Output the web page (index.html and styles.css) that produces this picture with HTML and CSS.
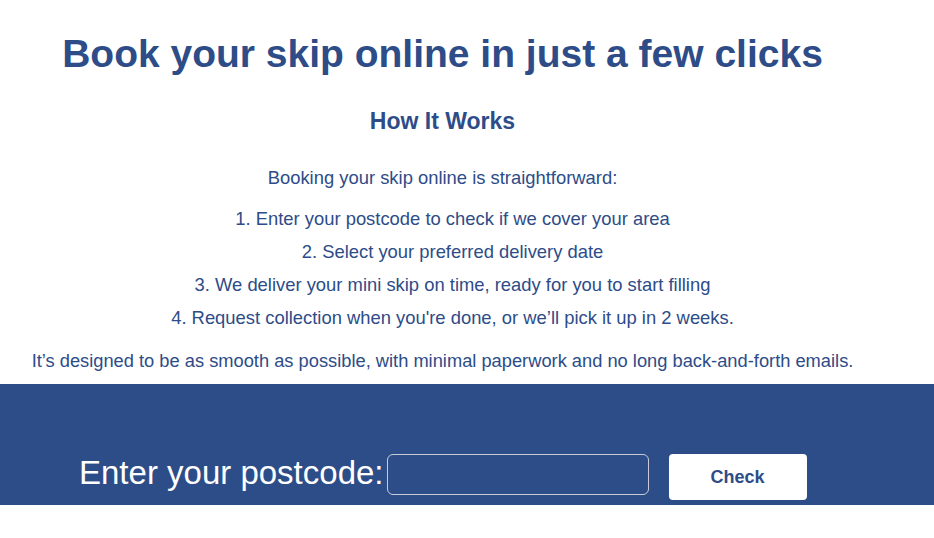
FILE: index.html
```html
<!DOCTYPE html>
<html lang="en">

<head>
    <meta charset="UTF-8">
    <meta name="viewport" content="width=device-width, initial-scale=1.0">
    <title>Book your skip online</title>
    <link rel="stylesheet" href="styles.css">
</head>

<body>
    <div class="intro">
        <h1>Book your skip online in just a few clicks</h1>
        <h2>How It Works</h2>
        <p class="lead">Booking your skip online is straightforward:</p>
        <ol class="steps">
            <li>1. Enter your postcode to check if we cover your area</li>
            <li>2. Select your preferred delivery date</li>
            <li>3. We deliver your mini skip on time, ready for you to start filling</li>
            <li>4. Request collection when you're done, or we’ll pick it up in 2 weeks.</li>
        </ol>
        <p class="note">It’s designed to be as smooth as possible, with minimal paperwork and no long back-and-forth emails.</p>
    </div>

    <!-- Postcode check -->
    <section class="postcode">
        <form class="postcode-form">
            <label for="postcode">Enter your postcode:</label>
            <input type="text" id="postcode">
            <button type="submit">Check</button>
        </form>
    </section>
</body>

</html>
```

FILE: styles.css
```css
body {
    font-family: "Liberation Sans", Arial, sans-serif;
    margin: 0;
    padding: 0;
    background-color: white;
    color: #2d4c88;
}

.intro {
    width: 885px;
    text-align: center;
    padding-top: 32px;
    padding-bottom: 12px;
}

h1 {
    font-size: 39px;
    margin: 0 0 32px;
}

h2 {
    font-size: 23px;
    margin: 0 0 32px;
}

.lead {
    font-size: 18.4px;
    margin: 0 0 13px;
}

.steps {
    list-style: none;
    padding: 0 0 0 20px;
    margin: 0 0 16px;
    font-size: 18.4px;
}

.steps li {
    line-height: 33px;
}

.note {
    font-size: 18.3px;
    margin: 0;
}

.postcode {
    background-color: #2d4d89;
    padding: 70px 0 5px 79px;
}

.postcode-form {
    display: flex;
    align-items: flex-start;
}

.postcode label {
    color: white;
    font-size: 33px;
    line-height: 38px;
    margin-right: 3px;
}

.postcode input {
    width: 262px;
    height: 41px;
    box-sizing: border-box;
    background: transparent;
    border: 1px solid #c9ccd6;
    border-radius: 6px;
    color: white;
    font-size: 18px;
    padding: 0 10px;
}

.postcode button {
    margin-left: 20px;
    width: 138px;
    height: 46px;
    background-color: white;
    color: #2d4c88;
    border: none;
    border-radius: 4px;
    font-family: inherit;
    font-size: 18px;
    font-weight: bold;
    cursor: pointer;
}
```
